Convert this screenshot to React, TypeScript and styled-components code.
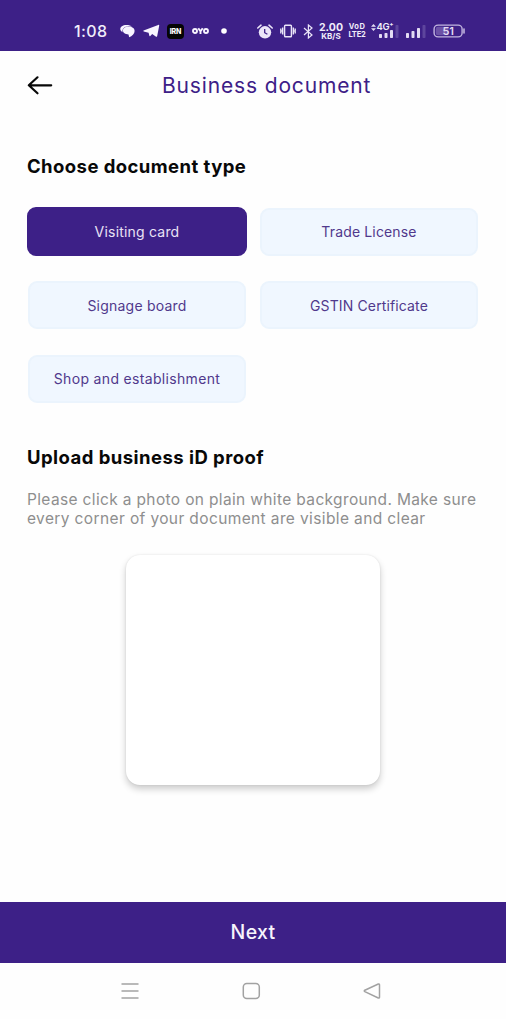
import React from 'react';
import styled, { createGlobalStyle } from 'styled-components';

const PURPLE = '#3d2087';

const GlobalStyle = createGlobalStyle`
  * { box-sizing: border-box; }
  body { margin: 0; background: #fefefe; font-family: Inter, "Liberation Sans", sans-serif; }
  button { font: inherit; border: 0; padding: 0; cursor: pointer; }
`;

const Screen = styled.div`
  width: 506px;
  height: 1019px;
  display: flex;
  flex-direction: column;
  background: #fefefe;
  overflow: hidden;
`;

const StatusBar = styled.div`
  height: 51px;
  flex: none;
  display: flex;
  align-items: center;
  padding: 11px 0 0 74px;
  background: ${PURPLE};
  color: #f1edfa;
  white-space: nowrap;
`;

const Slot = styled.div<{ $w: number; $gap: number }>`
  flex: none;
  width: ${(p) => p.$w}px;
  margin-left: ${(p) => p.$gap}px;
  display: flex;
  justify-content: center;
  svg { display: block; flex: none; }
`;

const Time = styled.span`
  width: 34px;
  flex: none;
  font-size: 16px;
  line-height: 20px;
  font-weight: 500;
  letter-spacing: 0.4px;
`;

const AppTile = styled.div`
  width: 17px;
  height: 15px;
  border-radius: 4px;
  background: #050505;
  color: #fff;
  font-size: 7px;
  font-weight: 800;
  line-height: 15px;
  letter-spacing: -0.2px;
  text-align: center;
`;

const Stack = styled.div`
  display: flex;
  flex-direction: column;
  align-items: center;
  font-weight: 700;
`;

const StackLine = styled.span<{ $size: number; $height?: number; $spacing?: number }>`
  font-size: ${(p) => p.$size}px;
  line-height: ${(p) => p.$height ?? 8}px;
  letter-spacing: ${(p) => p.$spacing ?? 0}px;
`;

const Header = styled.header`
  height: 69px;
  flex: none;
  display: flex;
  align-items: center;
  padding-left: 27px;
`;

const BackButton = styled.button`
  width: 26px;
  height: 20px;
  margin-top: -1px;
  background: none;
  svg { display: block; }
`;

const Title = styled.h1`
  margin: 1px 0 0 109px;
  color: ${PURPLE};
  font-size: 21px;
  line-height: 28px;
  font-weight: 400;
  letter-spacing: 0.85px;
  white-space: nowrap;
`;

const Content = styled.main`
  flex: 1;
  padding: 33px 27px 0;
`;

const SectionTitle = styled.h2<{ $spacing: number }>`
  margin: 0;
  color: #080808;
  font-size: 18.5px;
  line-height: 26px;
  font-weight: 700;
  letter-spacing: ${(p) => p.$spacing}px;
  white-space: nowrap;
`;

const TypeGrid = styled.div`
  display: grid;
  grid-template-columns: 220px 220px;
  grid-auto-rows: 49px;
  gap: 24.5px 12px;
  margin: 28px 0 41px;
`;

const TypeButton = styled.button<{ $active?: boolean; $spacing: number }>`
  margin: ${(p) => (p.$active ? '0' : '0.5px 1px')};
  border: 2px solid ${(p) => (p.$active ? PURPLE : '#ebf4fd')};
  border-radius: 9px;
  background: ${(p) => (p.$active ? PURPLE : '#f0f7ff')};
  color: ${(p) => (p.$active ? '#e9e2f5' : '#50398c')};
  font-size: 14px;
  letter-spacing: ${(p) => p.$spacing}px;
  white-space: nowrap;
`;

const Hint = styled.p`
  margin: 20px 0 0;
  color: #8e8e8e;
  font-size: 15.5px;
  line-height: 19px;
  white-space: nowrap;
`;

const HintLine = styled.span<{ $spacing: number }>`
  display: block;
  letter-spacing: ${(p) => p.$spacing}px;
`;

const UploadCard = styled.div`
  width: 254px;
  height: 230px;
  margin: 27px auto 0;
  border-radius: 14px;
  background: #fff;
  box-shadow: 0 4px 7px rgba(0, 0, 0, 0.2), 0 0 2px rgba(0, 0, 0, 0.1);
`;

const NextButton = styled.button`
  height: 61px;
  flex: none;
  padding-bottom: 2px;
  background: ${PURPLE};
  color: #f7f4fc;
  font-size: 19.5px;
  font-weight: 500;
  letter-spacing: 0.3px;
`;

const NavBar = styled.nav`
  height: 56px;
  flex: none;
  display: flex;
  align-items: center;
  justify-content: space-between;
  padding: 0 125px 0 121px;
  svg { display: block; }
`;

const SignalBars = ({ plus }: { plus?: boolean }) => (
  <svg width="20" height="15" viewBox="0 0 20 15" fill="#e3dcf3">
    <rect x="0" y={plus ? 10 : 9} width="3" height={plus ? 4 : 5} rx=".7" />
    <rect x="5.5" y={plus ? 9 : 7} width="3" height={plus ? 5 : 7} rx=".7" />
    <rect x="11" y={plus ? 6 : 4} width="3" height={plus ? 8 : 10} rx=".7" />
    <rect x="16.5" y="1" width="3" height="13" rx=".7" opacity=".2" />
  </svg>
);

const Network = styled.div`
  width: 28px;
  height: 15px;
  display: flex;
  justify-content: flex-end;
  position: relative;
`;

const NetworkLabel = styled.span`
  position: absolute;
  left: 6px;
  top: -2px;
  font-size: 9.5px;
  line-height: 9px;
  font-weight: 600;
  letter-spacing: -0.4px;
`;

const Arrows = styled.svg`
  position: absolute;
  left: 0;
  top: 0;
`;

const documentTypes = [
  { label: 'Visiting card', spacing: 0.2, active: true },
  { label: 'Trade License', spacing: 0.15 },
  { label: 'Signage board', spacing: 0.22 },
  { label: 'GSTIN Certificate', spacing: 0.13 },
  { label: 'Shop and establishment', spacing: 0.33 },
];

export default function App() {
  return (
    <>
      <GlobalStyle />
      <Screen>
        <StatusBar>
          <Time>1:08</Time>
          <Slot $w={15} $gap={12}>
            <svg width="15" height="14" viewBox="0 0 15 14" fill="#f8f5ff">
              <path d="M6.400 1C2.700 1 .3 2.800.3 5.100c0 1.400.9 2.500 2.200 3.100C2.100 4.700 4.500 2.300 8.400 2.200L12 2.600C10.900 1.600 8.900 1 6.400 1Z" />
              <path d="M8.400 2.500C5.200 2.500 2.900 4.300 2.900 6.600c0 2.300 2.400 3.900 5.600 3.900L9.200 13.200c2.900-1.300 5.400-3.500 5.400-6.300C14.600 4.300 12 2.500 8.400 2.500Z" />
            </svg>
          </Slot>
          <Slot $w={17} $gap={8}>
            <svg width="17" height="14" viewBox="0 0 17 14" fill="#f8f5ff">
              <path d="M.6 6.600 15.200.9c.7-.3 1.100.1 1 .8L14.200 12c-.2.9-.8 1.100-1.500.6L9.200 10l-1.900 1.900c-.4.4-.9.300-1-.300L5.600 8.700.7 7.400C.1 7.200.1 6.800.6 6.600Zm5.800 1.700 6.400-4.500-4.900 5.300Z" />
            </svg>
          </Slot>
          <Slot $w={17} $gap={7}><AppTile>IRN</AppTile></Slot>
          <Slot $w={17} $gap={8}>
            <svg width="17" height="8" viewBox="0 0 17 8" fill="none" stroke="#f8f5ff" strokeWidth="1.900">
              <circle cx="3" cy="4" r="2" />
              <path d="m6.300 1.300 2.200 3 2.200-3M8.500 4v3" />
              <circle cx="14" cy="4" r="2" />
            </svg>
          </Slot>
          <Slot $w={6} $gap={12}>
            <svg width="6" height="6"><circle cx="3" cy="3" r="2.800" fill="#fff" /></svg>
          </Slot>
          <Slot $w={16} $gap={30}>
            <svg width="16" height="15" viewBox="0 0 16 15" fill="none">
              <circle cx="8" cy="8.300" r="6.200" fill="#ebe5f8" />
              <path d="M.8 4 4 1.200M15.200 4 12 1.200" stroke="#ebe5f8" strokeWidth="1.600" strokeLinecap="round" />
              <path d="M7.700 5v3.700l2.700 1.500" stroke={PURPLE} strokeWidth="1.300" />
            </svg>
          </Slot>
          <Slot $w={16} $gap={7}>
            <svg width="16" height="14" viewBox="0 0 16 14" fill="none" stroke="#ebe5f8" strokeWidth="1.400">
              <rect x="4.600" y="1.200" width="6.800" height="11.600" rx=".8" />
              <path d="M2.700 3.500v7M.8 4.500v2l.6.5-.6.600v2M13.300 3.500v7M15.200 4.500v2l-.6.5.6.600v2" />
            </svg>
          </Slot>
          <Slot $w={11} $gap={7}>
            <svg width="11" height="15" viewBox="0 0 11 15" fill="none" stroke="#ebe5f8" strokeWidth="1.200">
              <path d="m1 4 8 7-3.600 3V1L9 4l-8 7" />
            </svg>
          </Slot>
          <Slot $w={25} $gap={4.5}>
            <Stack>
              <StackLine $size={10.5} $height={9}>2.00</StackLine>
              <StackLine $size={8} $height={8}>KB/S</StackLine>
            </Stack>
          </Slot>
          <Slot $w={17} $gap={5}>
            <Stack>
              <StackLine $size={7.5} $spacing={0.5}>VoD</StackLine>
              <StackLine $size={7.5} $spacing={-0.2}>LTE2</StackLine>
            </Stack>
          </Slot>
          <Slot $w={28} $gap={5}>
            <Network>
              <Arrows width="5" height="7" viewBox="0 0 5 7" fill="#e3dcf3"><path d="M2.500 0 5 2.800H0ZM2.500 7 0 4.200h5Z" /></Arrows>
              <NetworkLabel>4G⁺</NetworkLabel>
              <SignalBars plus />
            </Network>
          </Slot>
          <Slot $w={20} $gap={7}><SignalBars /></Slot>
          <Slot $w={33} $gap={7}>
            <svg width="33" height="14" viewBox="0 0 33 14">
              <rect x="1.100" y="1.100" width="28" height="11.800" rx="4" fill="none" stroke="#c2b5df" strokeWidth="1.400" />
              <path d="M5 2.800h10.500v8.400H5A2.200 2.200 0 0 1 2.800 9V5A2.200 2.200 0 0 1 5 2.800Z" fill="#6c52a6" />
              <path d="M31 5v4" stroke="#c2b5df" strokeWidth="1.600" strokeLinecap="round" />
              <text x="15.200" y="11" textAnchor="middle" fontSize="11" fontWeight="600" fontFamily="Inter, sans-serif" fill="#e3dcf3">51</text>
            </svg>
          </Slot>
        </StatusBar>

        <Header>
          <BackButton aria-label="Back">
            <svg width="26" height="20" viewBox="0 0 26 20" fill="none" stroke="#080808" strokeWidth="2.200" strokeLinecap="round" strokeLinejoin="round">
              <path d="M24.200 10.300H2M10.500 2.300 1.800 10.300l8.700 8" />
            </svg>
          </BackButton>
          <Title>Business document</Title>
        </Header>

        <Content>
          <SectionTitle $spacing={0.43}>Choose document type</SectionTitle>
          <TypeGrid>
            {documentTypes.map((t) => (
              <TypeButton key={t.label} $active={t.active} $spacing={t.spacing}>{t.label}</TypeButton>
            ))}
          </TypeGrid>
          <SectionTitle $spacing={0.45}>Upload business iD proof</SectionTitle>
          <Hint>
            <HintLine $spacing={0.35}>Please click a photo on plain white background. Make sure</HintLine>
            <HintLine $spacing={0.38}>every corner of your document are visible and clear</HintLine>
          </Hint>
          <UploadCard />
        </Content>

        <NextButton>Next</NextButton>
        <NavBar>
          <svg width="18" height="18" viewBox="0 0 18 18" stroke="#a2a2a2" strokeWidth="1.600"><path d="M.5 2h17M.5 9h17M.5 16h17" /></svg>
          <svg width="19" height="18" viewBox="0 0 19 18" fill="none" stroke="#a2a2a2" strokeWidth="1.500"><rect x="1.300" y="1.500" width="16" height="15" rx="3.500" /></svg>
          <svg width="18" height="18" viewBox="0 0 18 18" fill="none" stroke="#a2a2a2" strokeWidth="1.500" strokeLinejoin="round"><path d="M15.300 2 1.800 8.200q-1 .7 0 1.400L15.300 16q1.200.4 1.200-.9V2.900q0-1.300-1.200-.9Z" /></svg>
        </NavBar>
      </Screen>
    </>
  );
}
